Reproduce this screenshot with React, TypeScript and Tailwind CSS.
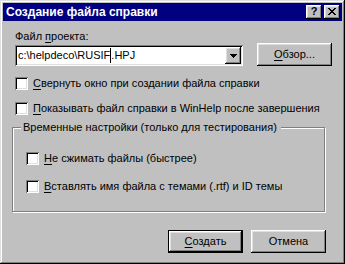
import React from "react";

const raised =
  "shadow-[inset_-1px_-1px_#000,inset_1px_1px_#fff,inset_-2px_-2px_#808080,inset_2px_2px_#dfdfdf]";
const windowFrame =
  "shadow-[inset_-1px_-1px_#000,inset_1px_1px_#dfdfdf,inset_-2px_-2px_#808080,inset_2px_2px_#fff]";
const sunken =
  "shadow-[inset_1px_1px_#808080,inset_-1px_-1px_#fff,inset_2px_2px_#000,inset_-2px_-2px_#dfdfdf]";

function U({ children }: { children: React.ReactNode }) {
  return <span className="underline underline-offset-[2px] decoration-1">{children}</span>;
}

function Check({ children }: { children: React.ReactNode }) {
  return (
    <div className="flex items-center h-[13px] gap-[5px]">
      <div className={`w-[13px] h-[13px] bg-white shrink-0 ${sunken}`} />
      <span className="whitespace-nowrap">{children}</span>
    </div>
  );
}

function Button({
  children,
  def,
}: {
  children: React.ReactNode;
  def?: boolean;
}) {
  if (def) {
    return (
      <div className="w-[75px] h-[23px] border border-black">
        <div className={`w-full h-full flex items-center justify-center bg-[#c0c0c0] ${raised}`}>
          {children}
        </div>
      </div>
    );
  }
  return (
    <div className={`w-[75px] h-[23px] flex items-center justify-center bg-[#c0c0c0] ${raised}`}>
      {children}
    </div>
  );
}

export default function App() {
  return (
    <div
      className={`w-[345px] h-[264px] bg-[#c0c0c0] p-[3px] flex flex-col text-black font-['Liberation_Sans',Arial,sans-serif] text-[11px] leading-[13px] ${windowFrame}`}
    >
      {/* Title bar */}
      <div className="h-[18px] bg-[#000080] flex items-center justify-between pl-[3px] pr-[2px] shrink-0">
        <span className="text-white font-bold text-[12px] leading-[14px] whitespace-nowrap">
          Создание файла справки
        </span>
        <div className="flex gap-[2px]">
          <div className={`w-[16px] h-[14px] bg-[#c0c0c0] flex items-center justify-center ${raised}`}>
            <span className="font-bold text-[11px] leading-[11px] -mt-[1px]">?</span>
          </div>
          <div className={`w-[16px] h-[14px] bg-[#c0c0c0] flex items-center justify-center ${raised}`}>
            <svg width="8" height="7" viewBox="0 0 8 7" shapeRendering="crispEdges" className="-mt-[1px]">
              <path
                d="M0 0h2v1h-2zM6 0h2v1h-2zM1 1h2v1h-2zM5 1h2v1h-2zM2 2h4v1h-4zM3 3h2v1h-2zM2 4h4v1h-4zM1 5h2v1h-2zM5 5h2v1h-2zM0 6h2v1h-2zM6 6h2v1h-2z"
                fill="#000"
              />
            </svg>
          </div>
        </div>
      </div>

      {/* Body */}
      <div className="flex flex-col pl-[9px]">
        <div className="ml-[3px] mt-[9px] whitespace-nowrap">
          Файл <U>п</U>роекта:
        </div>

        <div className="ml-[3px] flex items-end h-[23px]">
          <div className={`w-[228px] h-[21px] bg-white relative flex items-center pl-[3px] ${sunken}`}>
            <span className="whitespace-nowrap flex items-center">
              c:\helpdeco\RUSIF
              <span className="inline-block w-[1px] h-[15px] bg-black" />
              .HPJ
            </span>
            <div
              className={`absolute right-[2px] top-[2px] w-[16px] h-[17px] bg-[#c0c0c0] flex items-center justify-center ${raised}`}
            >
              <svg width="7" height="4" viewBox="0 0 7 4" shapeRendering="crispEdges">
                <path d="M0 0h7v1h-7zM1 1h5v1h-5zM2 2h3v1h-3zM3 3h1v1h-1z" fill="#000" />
              </svg>
            </div>
          </div>
          <div className="ml-[14px]">
            <Button>
              <span>
                <U>О</U>бзор...
              </span>
            </Button>
          </div>
        </div>

        <div className="ml-[3px] mt-[11px]">
          <Check>
            <U>С</U>вернуть окно при создании файла справки
          </Check>
        </div>
        <div className="ml-[3px] mt-[12px]">
          <Check>
            <U>П</U>оказывать файл справки в WinHelp после завершения
          </Check>
        </div>

        {/* Group box */}
        <div className="mt-[12px] w-[313px] h-[85px] border border-[#808080] shadow-[inset_1px_1px_#fff,1px_1px_#fff] relative flex flex-col">
          <span className="absolute left-[8px] -top-[7px] bg-[#c0c0c0] pl-[2px] pr-[4px] whitespace-nowrap">
            Временные настройки (только для тестирования)
          </span>
          <div className="ml-[13px] mt-[24px]">
            <Check>
              <U>Н</U>е сжимать файлы (быстрее)
            </Check>
          </div>
          <div className="ml-[13px] mt-[15px]">
            <Check>
              <U>В</U>ставлять имя файла с темами (.rtf) и ID темы
            </Check>
          </div>
        </div>

        <div className="mt-[18px] flex justify-end gap-[8px] pr-[16px]">
          <Button def>
            <span>
              <U>С</U>оздать
            </span>
          </Button>
          <Button>
            <span>Отмена</span>
          </Button>
        </div>
      </div>
    </div>
  );
}
